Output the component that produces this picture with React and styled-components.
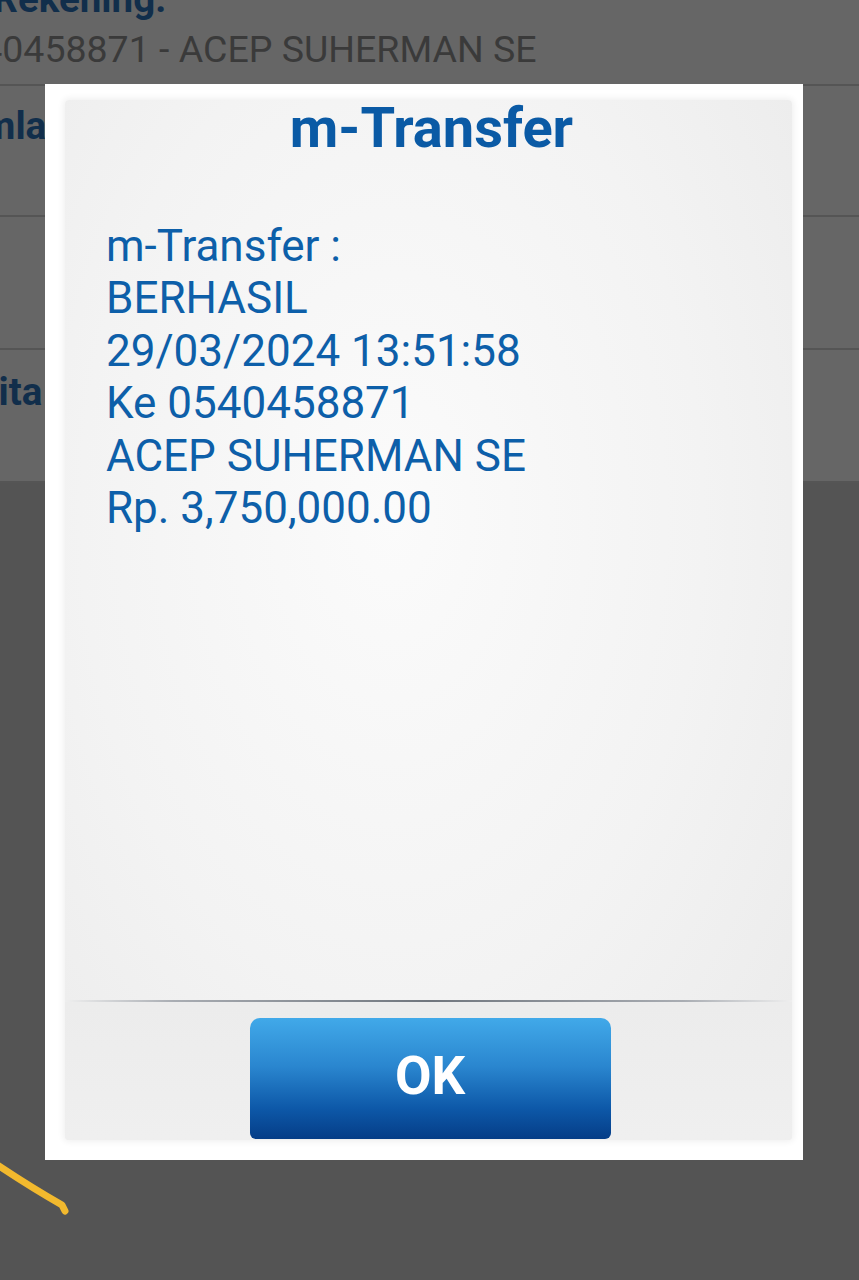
import React from 'react'
import styled, { createGlobalStyle } from 'styled-components'

const GlobalStyle = createGlobalStyle`
  html, body {
    margin: 0;
    padding: 0;
    background: #545454;
    overflow: hidden;
  }
  * {
    box-sizing: border-box;
  }
`

const Page = styled.div`
  position: relative;
  width: 859px;
  height: 1280px;
  overflow: hidden;
  background: #545454;
  font-family: Roboto, 'Noto Sans', sans-serif;
`

const FormList = styled.div`
  display: flex;
  flex-direction: column;
`

// the form behind the dialog is scrolled a bit to the left
const Row = styled.div`
  height: ${(p) => p.h}px;
  background: #666666;
  border-bottom: 2px solid #555555;
  padding-top: ${(p) => p.pt || 0}px;
  display: flex;
  flex-direction: column;
  margin-left: -61px;
  width: 920px;
`

const Label = styled.div`
  font-size: 38.5px;
  font-weight: 700;
  line-height: 42px;
  color: #112e4b;
  margin-top: ${(p) => p.mt || 0}px;
  white-space: nowrap;
`

const Value = styled.div`
  font-size: 37.5px;
  line-height: 42px;
  color: #3a3a3a;
  margin-top: ${(p) => p.mt || 0}px;
  white-space: nowrap;
`

const Dialog = styled.div`
  position: absolute;
  top: 84px;
  left: 45px;
  width: 758px;
  height: 1076px;
  background: #ffffff;
  padding: 16px 11px 20px 20px;
  display: flex;
`

const Panel = styled.div`
  flex: 1;
  display: flex;
  flex-direction: column;
  border-radius: 4px;
  background: radial-gradient(ellipse at 45% 40%, #fbfbfb 0%, #f3f3f3 55%, #eaeaea 100%);
  box-shadow: 0 0 6px 2px rgba(0, 0, 0, 0.06);
  overflow: hidden;
`

const Title = styled.div`
  height: 56px;
  line-height: 56px;
  text-align: center;
  font-size: 56px;
  font-weight: 700;
  color: #0a5aa5;
  padding-left: 6px;
`

const Message = styled.div`
  flex: 1;
  padding: 64px 0 0 41px;
  color: #0d5fa9;
  font-size: 44px;
  line-height: 52.4px;
`

const Line = styled.div`
  white-space: nowrap;
`

const Footer = styled.div`
  height: 140px;
  display: flex;
  justify-content: center;
  align-items: flex-start;
  padding-top: 16px;
  padding-left: 3px;
  background: linear-gradient(180deg, #ececec 0%, #efefef 100%);
  border-top: 2px solid transparent;
  border-image: linear-gradient(90deg, rgba(150, 155, 162, 0) 0%, #a9adb3 15%, #6f757d 50%, #a9adb3 85%, rgba(150, 155, 162, 0) 100%) 1;
`

const OkButton = styled.button`
  width: 361px;
  height: 121px;
  border: none;
  border-radius: 10px 10px 6px 6px;
  padding: 0 0 6px;
  background: linear-gradient(180deg, #41a9e9 0%, #2a86cf 40%, #0d58a8 75%, #053d87 100%);
  color: #ffffff;
  font-family: Roboto, 'Noto Sans', sans-serif;
  font-size: 53px;
  font-weight: 700;
  cursor: pointer;
`

const Scribble = styled.svg`
  position: absolute;
  left: 0;
  top: 1150px;
`

export default function App() {
  return (
    <Page>
      <GlobalStyle />
      <FormList>
        <Row h={86}>
          <Label mt={-22}>Ke Rekening:</Label>
          <Value mt={8}>0540458871 - ACEP SUHERMAN SE</Value>
        </Row>
        <Row h={131} pt={19}>
          <Label>Jumlah</Label>
        </Row>
        <Row h={133} />
        <Row h={133} pt={21}>
          <Label>Berita</Label>
        </Row>
      </FormList>

      <Dialog>
        <Panel>
          <Title>m-Transfer</Title>
          <Message>
            <Line>m-Transfer :</Line>
            <Line>BERHASIL</Line>
            <Line>29/03/2024 13:51:58</Line>
            <Line>Ke 0540458871</Line>
            <Line>ACEP SUHERMAN SE</Line>
            <Line>Rp. 3,750,000.00</Line>
          </Message>
          <Footer>
            <OkButton>OK</OkButton>
          </Footer>
        </Panel>
      </Dialog>

      <Scribble width="80" height="70" viewBox="0 0 80 70">
        <path
          d="M -4 14 Q 32 38 62 55 L 65 61"
          fill="none"
          stroke="#f2b92e"
          strokeWidth="7"
          strokeLinecap="round"
          strokeLinejoin="round"
        />
      </Scribble>
    </Page>
  )
}
